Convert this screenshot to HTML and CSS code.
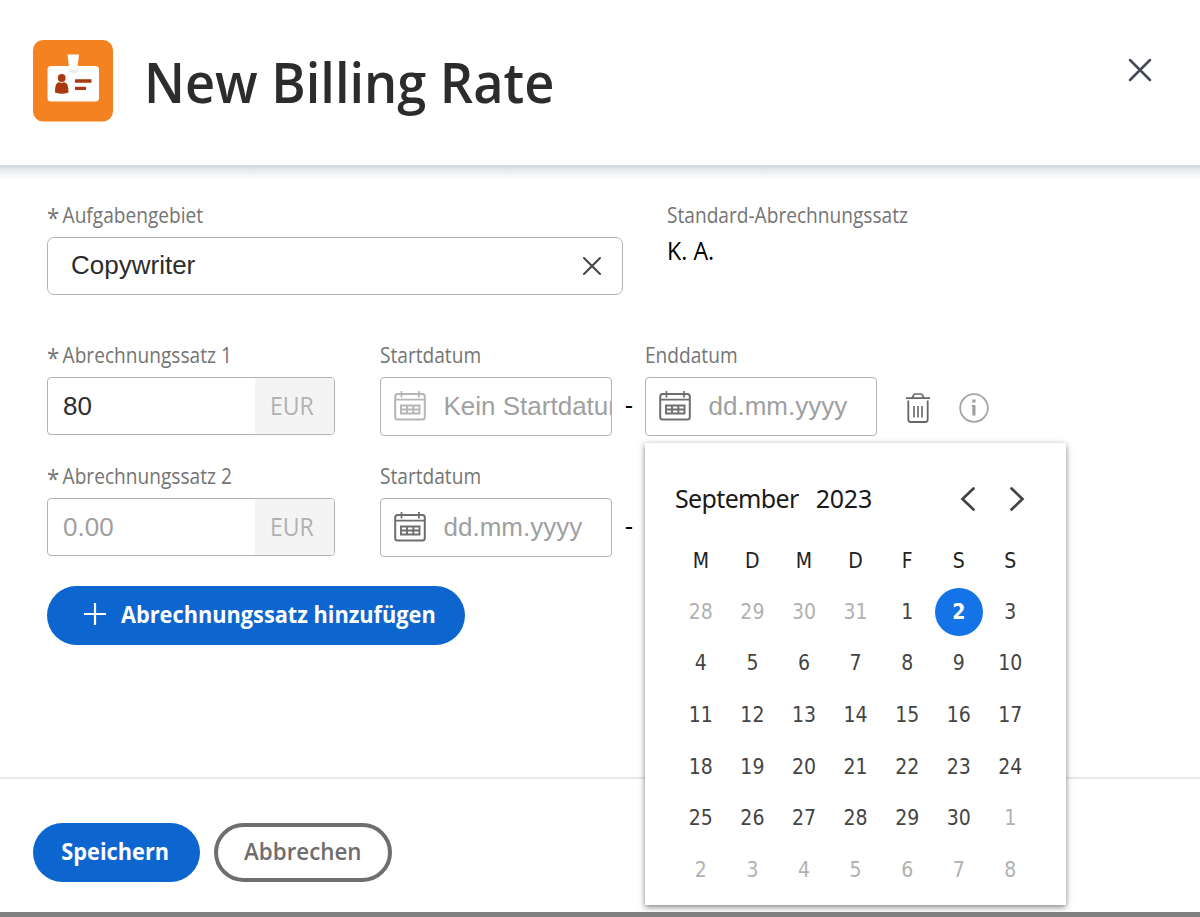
FILE: index.html
```html
<!DOCTYPE html>
<html lang="de">
<head>
<meta charset="utf-8">
<title>New Billing Rate</title>
<link rel="stylesheet" href="styles.css">
</head>
<body>
<svg class="defs" width="0" height="0">
  <symbol id="calendar" viewBox="0 0 32 30">
    <g fill="none" stroke="currentColor">
      <rect x="1.2" y="3" width="29.6" height="25.6" rx="2.5" stroke-width="2"/>
      <path d="M1 8.600h30M7.500 0v6.500M25 0v6.500" stroke-width="1.7"/>
      <path d="M7 14.500h18.500v8H7zM7 18.500h18.500M13 14.500v8M19.300 14.500v8" stroke-width="1.900"/>
    </g>
  </symbol>
</svg>
<div class="dialog">
  <header class="header">
    <svg class="logo" width="80" height="82" viewBox="0 0 80 82">
      <rect width="80" height="81.500" rx="10" fill="#f58220"/>
      <rect x="14.5" y="26" width="51.5" height="35.5" rx="3.5" fill="#fff"/>
      <path d="M35 28h11l-1.500 4q-4 2.500-8 0z" fill="#ececec"/>
      <path d="M34.500 14.500h11.500l-1.500 12.500q-.3 3-3.500 3h-1.500q-3.200 0-3.500-3z" fill="#fff"/>
      <circle cx="28.700" cy="38" r="3.900" fill="#a93a10"/>
      <path d="M22 52.500c0-6 1-10 4-10.300q2.500 1.200 5 0c3.500.3 4.500 4.300 4.500 10.300q-6.500 2.500-13.500 0z" fill="#a93a10"/>
      <path d="M42 41h16.500M42 48.300h11" stroke="#a93a10" stroke-width="3.300"/>
    </svg>
    <h1 class="title">New Billing Rate</h1>
    <svg class="close" width="24" height="24" viewBox="0 0 24 24"><path d="M2 2l20 20M22 2L2 22" stroke="#444956" stroke-width="2.500" stroke-linecap="round"/></svg>
  </header>

  <main class="form">
    <div class="row row-role">
      <div class="field field-role">
        <div class="label required">Aufgabengebiet</div>
        <div class="input role"><span>Copywriter</span>
          <svg width="20" height="20" viewBox="0 0 20 20"><path d="M2 2l16 16M18 2L2 18" stroke="#444" stroke-width="2" stroke-linecap="round"/></svg>
        </div>
      </div>
      <div class="field">
        <div class="label">Standard-Abrechnungssatz</div>
        <div class="static">K. A.</div>
      </div>
    </div>

    <div class="row row-rate">
      <div class="field field-rate">
        <div class="label required">Abrechnungssatz 1</div>
        <div class="input amount"><span class="value">80</span><span class="unit"><span>EUR</span></span></div>
      </div>
      <div class="field field-date">
        <div class="label">Startdatum</div>
        <div class="input date disabled"><svg width="32" height="30"><use href="#calendar"/></svg><span>Kein Startdatum</span></div>
      </div>
      <div class="dash">-</div>
      <div class="field field-date">
        <div class="label">Enddatum</div>
        <div class="input date"><svg width="32" height="30"><use href="#calendar"/></svg><span>dd.mm.yyyy</span></div>
        <div class="picker">
          <div class="picker-head">
            <span class="month">September</span><span class="year">2023</span>
            <svg class="prev" width="16" height="26" viewBox="0 0 16 26"><path d="M13.500 2.500L2.500 13l11 10.500"/></svg>
            <svg class="next" width="16" height="26" viewBox="0 0 16 26"><path d="M2.500 2.500L13.500 13l-11 10.500"/></svg>
          </div>
          <div class="days">
            <b>M</b><b>D</b><b>M</b><b>D</b><b>F</b><b>S</b><b>S</b>
            <i>28</i><i>29</i><i>30</i><i>31</i><span>1</span><span class="selected">2</span><span>3</span>
            <span>4</span><span>5</span><span>6</span><span>7</span><span>8</span><span>9</span><span>10</span>
            <span>11</span><span>12</span><span>13</span><span>14</span><span>15</span><span>16</span><span>17</span>
            <span>18</span><span>19</span><span>20</span><span>21</span><span>22</span><span>23</span><span>24</span>
            <span>25</span><span>26</span><span>27</span><span>28</span><span>29</span><span>30</span><i>1</i>
            <i>2</i><i>3</i><i>4</i><i>5</i><i>6</i><i>7</i><i>8</i>
          </div>
        </div>
      </div>
      <svg class="trash" width="24" height="30" viewBox="0 0 24 30"><g fill="none" stroke="#666"><path d="M0 5.200h24M6 5l1.800-3.200q.4-.8 1.200-.8h6q.8 0 1.200.8L18 5" stroke-width="1.700"/><path d="M2.300 7.500v19q0 2.500 2.500 2.500h14.400q2.500 0 2.500-2.500v-19" stroke-width="1.800"/><path d="M8 13v11.500M12 13v11.500M16 13v11.500" stroke-width="1.600"/></g></svg>
      <svg class="info" width="30" height="30" viewBox="0 0 30 30"><circle cx="15" cy="15" r="13.800" fill="none" stroke="#a6a6a6" stroke-width="1.800"/><path d="M13.300 6.500h3.200v3h-3.200zM12.700 12h3.800v10.500h-3.200V13.500h-.6z" fill="#a0a0a0"/></svg>
    </div>

    <div class="row row-rate">
      <div class="field field-rate">
        <div class="label required">Abrechnungssatz 2</div>
        <div class="input amount empty"><span class="value">0.00</span><span class="unit"><span>EUR</span></span></div>
      </div>
      <div class="field field-date">
        <div class="label">Startdatum</div>
        <div class="input date"><svg width="32" height="30"><use href="#calendar"/></svg><span>dd.mm.yyyy</span></div>
      </div>
      <div class="dash">-</div>
    </div>

    <button class="btn primary add"><svg width="22" height="22" viewBox="0 0 22 22"><path d="M11 0v22M0 11h22" stroke="#fff" stroke-width="2.200"/></svg><span>Abrechnungssatz hinzufügen</span></button>
  </main>

  <footer class="footer">
    <button class="btn primary save"><span>Speichern</span></button>
    <button class="btn secondary"><span>Abbrechen</span></button>
  </footer>
</div>
</body>
</html>
```
FILE: styles.css
```css
* { box-sizing: border-box; }
body { margin: 0; background: #fff; font-family: "Open Sans", "Noto Sans", sans-serif; color: #2c2c2c; }
.defs { position: absolute; }
.dialog { height: 917px; display: flex; flex-direction: column; border-bottom: 5px solid #808080; overflow: hidden; }
.header { height: 165px; flex: none; display: flex; align-items: flex-start; padding: 40px 48px 0 33px; }
.logo { flex: none; }
.title { margin: 4px 0 0 31px; font-size: 55.500px; line-height: 76px; font-weight: 600; white-space: nowrap; transform: scaleX(.942); transform-origin: left; }
.close { margin: 18px 0 0 auto; }
.form { flex: 1; padding: 39px 47px 0; background: linear-gradient(#cfd6dc, #e6eaed 5px, #f7f8f9 11px, #fff 16px); }
.row { display: flex; }
.row-role { height: 140px; gap: 44px; }
.row-rate { height: 121px; }
.field { position: relative; flex: none; }
.field-role { width: 576px; }
.field-rate { width: 288px; margin-right: 45px; }
.field-date { width: 232px; }
.label { height: 24px; margin-bottom: 9px; font-size: 21.500px; line-height: 22px; color: #747474; white-space: nowrap; transform: scaleX(.889); transform-origin: left; }
.required::before { content: "*"; display: inline-block; width: 17.500px; font-size: 25px; line-height: 20px; vertical-align: -4px; }
.input { height: 58px; display: flex; align-items: center; border: 1px solid #b3b3b3; border-radius: 4px; font: 26px "Liberation Sans", Arial, sans-serif; background: #fff; }
.role { border-radius: 7px; padding: 0 20px 2px 23px; justify-content: space-between; }
.role svg { margin-top: 2px; }
.static { font-size: 25px; line-height: 26px; color: #000; transform: scaleX(.93); transform-origin: left; }
.amount { overflow: hidden; }
.value { flex: 1; padding-left: 15px; }
.unit { align-self: stretch; width: 79px; display: grid; place-items: center; padding: 0 5px 2px 0; background: #f4f4f4; color: #b1b1b1; font: 25px/1 "Open Sans", sans-serif; }
.unit span { transform: scaleX(.92); }
.date { height: 59px; padding-left: 13px; white-space: nowrap; color: #a0a0a0; }
.date svg { flex: none; margin: 0 17.500px 2px 0; color: #6e6e6e; }
.date span { flex: 1; min-width: 0; overflow: hidden; }
.date.disabled svg { color: #b5b5b5; }
.empty { color: #a0a0a0; }
.dash { width: 34px; margin-right: -1px; padding-top: 42px; text-align: center; font: 25px/38px "Liberation Sans", sans-serif; color: #000; }
.trash { margin: 49px 0 0 29px; }
.info { margin: 49px 0 0 29px; }

.picker { position: absolute; z-index: 2; left: 0; top: 99px; width: 421px; height: 462px; background: #fff; box-shadow: 0 2px 6px rgba(0, 0, 0, .5); font-family: "DejaVu Sans Condensed", "DejaVu Sans", sans-serif; }
.picker-head { height: 93px; display: flex; align-items: center; padding: 19px 41px 0 30px; font: 25px "Noto Sans", sans-serif; letter-spacing: -.65px; color: #1a1a1a; }
.month, .year { margin-top: -2px; }
.year { margin-left: 17px; letter-spacing: -.2px; }
.prev { margin-left: auto; }
.next { margin-left: 33px; }
.picker-head path { fill: none; stroke: #444; stroke-width: 2.700; stroke-linecap: round; }
.days { display: grid; grid-template-columns: repeat(7, 51.600px); grid-template-rows: 50px repeat(6, 51.600px); padding-left: 30px; place-items: center; font-size: 21px; color: #444; }
.days b { font-weight: 400; color: #222; }
.days i { font-style: normal; color: #b1b1b1; }
.selected { width: 48px; height: 48px; border-radius: 50%; display: grid; place-items: center; background: #1473e6; color: #fff; font-weight: 700; }

.btn { height: 59px; border: 0; border-radius: 30px; font: 600 23.500px "Open Sans", sans-serif; white-space: nowrap; display: flex; align-items: center; justify-content: center; padding: 0 0 3px; }
.btn span { transform: scaleX(.925); }
.primary { background: #0d66d0; color: #fff; font-weight: 700; }
.add { width: 418px; gap: 15px; padding-left: 37px; justify-content: flex-start; }
.add span { transform-origin: left; }
.footer { flex: none; height: 135px; border-top: 2px solid #e8e8e8; padding: 44px 33px 0; display: flex; gap: 14px; }
.save { width: 167px; padding-right: 2px; }
.secondary { width: 178px; border: 4px solid #6e6e6e; background: #fff; color: #6e6e6e; }
.secondary span { transform: scaleX(.95); }
```
